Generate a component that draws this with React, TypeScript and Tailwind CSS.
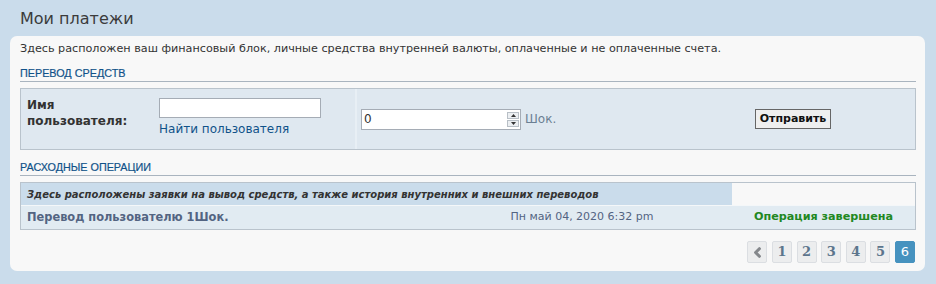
import { ChevronLeft } from "lucide-react";

const pages = ["1", "2", "3", "4", "5"];

const SectionTitle = ({ text }: { text: string }) => (
  <h3 className="border-b border-[#a9b4bf] pb-px text-[10.8px] leading-[14px] uppercase text-[#105289] [-webkit-text-stroke:0.2px_#105289] font-['Liberation_Sans',Arial,sans-serif]">
    {text}
  </h3>
);

const NumberInput = () => (
  <div className="flex h-[21px] w-[160px] border border-[#a5acb5] bg-white">
    <input
      defaultValue="0"
      className="min-w-0 flex-1 px-[2px] text-[12px] text-[#333] outline-none"
    />
    <div className="flex w-[13px] flex-col justify-center gap-px py-[2px] pr-[1px]">
      <div className="flex h-[8px] items-center justify-center border border-[#b8bfc6] bg-[#eceff2]">
        <svg width="5" height="3" viewBox="0 0 5 3">
          <path d="M0 3 L2.5 0 L5 3 Z" fill="#333" />
        </svg>
      </div>
      <div className="flex h-[8px] items-center justify-center border border-[#b8bfc6] bg-[#eceff2]">
        <svg width="5" height="3" viewBox="0 0 5 3">
          <path d="M0 0 L2.5 3 L5 0 Z" fill="#333" />
        </svg>
      </div>
    </div>
  </div>
);

export default function App() {
  return (
    <div className="h-[284px] w-[936px] bg-[#cadceb] pl-[10px] pr-[11px] pt-[9px] font-['DejaVu_Sans',Verdana,sans-serif] text-[#333]">
      <h2 className="pl-[10px] text-[16px] leading-[20px] text-[#3b3b3b]">Мои платежи</h2>
      <div className="mt-[7px] flex h-[235px] flex-col rounded-[7px] bg-[#f8f8f8] pl-[10px] pr-[9px] pt-[6px]">
        <p className="text-[11.2px] leading-[14px]">
          Здесь расположен ваш финансовый блок, личные средства внутренней валюты, оплаченные и не оплаченные счета.
        </p>

        <div className="mt-[10px]">
          <SectionTitle text="Перевод средств" />
        </div>

        <div className="mt-[6px] flex h-[62px] border border-[#b9c3cc] bg-[#dfe8f0]">
          <div className="flex w-[334px] pl-[6px] pt-[8px]">
            <div className="w-[132px] text-[12px] font-bold leading-[16px] text-[#333]">
              Имя
              <br />
              пользователя:
            </div>
            <div className="flex flex-col">
              <input className="mt-px h-[20px] w-[162px] border border-[#a5acb5] bg-white px-1 text-[12px] outline-none" />
              <a className="mt-[3px] text-[12px] leading-[16px] text-[#105289]">Найти пользователя</a>
            </div>
          </div>
          <div className="flex flex-1 items-center border-l-[2px] border-[#e8eff5] pl-[4px]">
            <div className="flex w-[394px] items-center">
              <NumberInput />
              <span className="ml-[4px] text-[12px] text-[#6b7f93]">Шок.</span>
            </div>
            <button className="h-[20px] w-[76px] border border-[#666] bg-[#efefef] text-[11px] font-bold text-[#111]">
              Отправить
            </button>
          </div>
        </div>

        <div className="mt-[10px]">
          <SectionTitle text="Расходные операции" />
        </div>

        <div className="mt-[6px] border border-[#b9c3cc]">
          <div className="grid h-[23px] grid-cols-[411px_300px_1fr] border-b border-[#f4f7f9]">
            <div className="col-span-2 flex items-center bg-[#cadceb] pl-[6px] text-[10px] font-bold italic text-[#333]">
              Здесь расположены заявки на вывод средств, а также история внутренних и внешних переводов
            </div>
            <div className="bg-[#f8f8f8]" />
          </div>
          <div className="grid h-[23px] grid-cols-[411px_300px_1fr] items-center bg-[#e1ebf2]">
            <div className="pl-[6px] text-[11.4px] font-bold text-[#536482]">Перевод пользователю 1Шок.</div>
            <div className="text-center text-[11px] text-[#536482]">Пн май 04, 2020 6:32 pm</div>
            <div className="text-center text-[11.2px] font-bold text-[#228822]">Операция завершена</div>
          </div>
        </div>

        <div className="mt-[11px] flex justify-end gap-[4.6px] pr-px">
          <div className="flex h-[22px] w-[20px] items-center justify-center rounded-[2px] border border-[#dbdee2] bg-[#ecedee]">
            <ChevronLeft size={15} strokeWidth={5} color="#85888c" />
          </div>
          {pages.map((p) => (
            <div
              key={p}
              className="flex h-[22px] w-[20px] items-center justify-center rounded-[2px] border border-[#dbdee2] bg-[#ecedee] font-['DejaVu_Serif',Georgia,serif] text-[13px] font-bold text-[#5c758c]"
            >
              {p}
            </div>
          ))}
          <div className="flex h-[22px] w-[20px] items-center justify-center rounded-[2px] border border-[#4692bf] bg-[#4692bf] text-[13px] text-white">
            6
          </div>
        </div>
      </div>
    </div>
  );
}
